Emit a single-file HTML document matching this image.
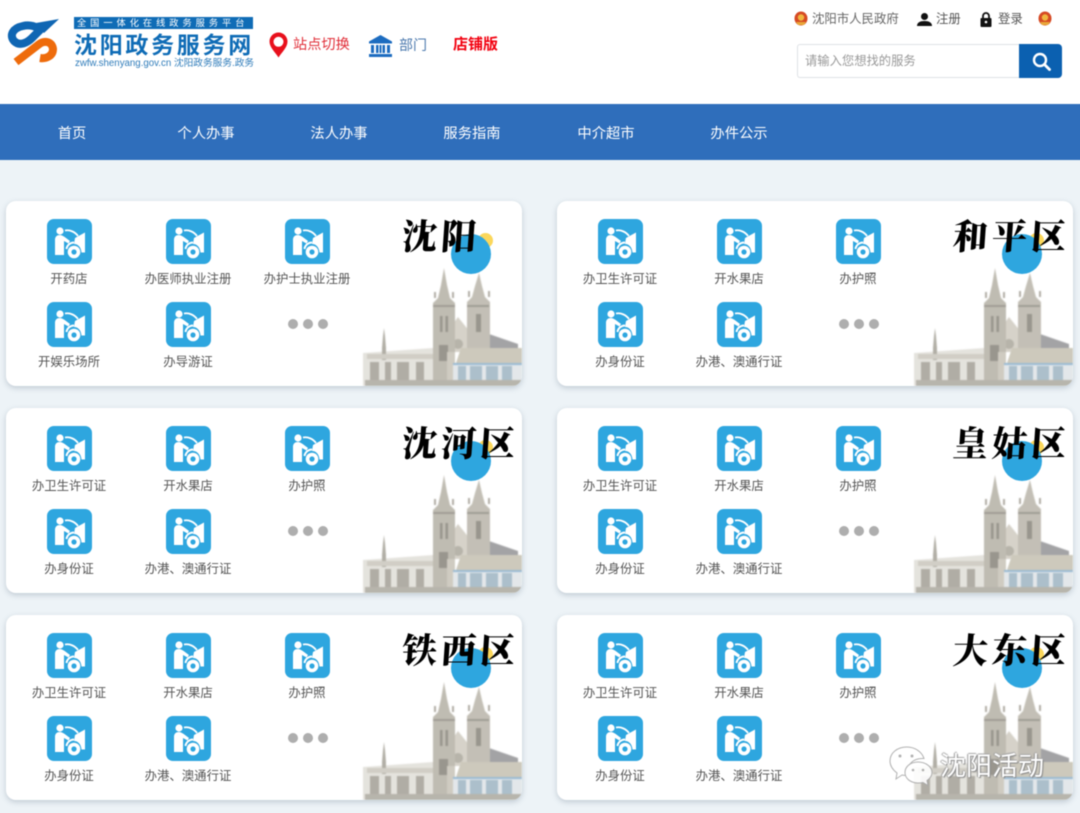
<!DOCTYPE html>
<html lang="zh">
<head>
<meta charset="utf-8">
<title>沈阳政务服务网</title>
<style>
html,body{margin:0;padding:0}
body{width:1080px;height:813px;overflow:hidden;background:#edf3f7;font-family:"Liberation Sans","Noto Sans CJK SC",sans-serif;position:relative}
#w{position:absolute;left:0;top:0;width:1080px;height:813px;filter:blur(.4px)}
.a{position:absolute;white-space:nowrap}
#top{position:absolute;left:-10px;top:-10px;width:1100px;height:114px;background:#fff}
#nav{position:absolute;left:-10px;top:104px;width:1100px;height:56px;background:#2f6ebb}
#nav span{position:absolute;top:0;width:100px;margin-left:-40px;text-align:center;line-height:60px;font-size:14.3px;color:#fff}
.card{position:absolute;width:516px;height:185px;background:#fff;border-radius:10px;box-shadow:0 2px 6px rgba(90,110,130,.3);overflow:hidden}
.c1{left:6px}.c2{left:557px}
.r1{top:201px}.r2{top:408px}.r3{top:615px}
.grid{position:absolute;left:3.5px;top:18px;width:357px}
.it{float:left;width:119px;height:83px;text-align:center;font-size:12.4px;line-height:20px;color:#555}
.it svg{display:block;width:45px;height:45px;margin:0 auto 5px}
.dots{position:relative}
.dots i{position:absolute;top:17px;width:10px;height:10px;border-radius:50%;background:#aeaeae}
.church{position:absolute;left:357px;top:67px;width:159px;height:118px;opacity:.9;filter:blur(.6px)}
.blue{position:absolute;left:445px;top:33px;width:40px;height:40px;border-radius:50%;background:#2ea6df}
.yel{position:absolute;left:472px;top:32px;width:15px;height:15px;border-radius:50%;background:#fbd75b}
.ttl{position:absolute;top:14px;left:396px;font-family:"Liberation Serif","Noto Serif CJK SC",serif;font-weight:900;font-size:35px;line-height:46px;letter-spacing:4px;color:#000;white-space:nowrap;transform:skewX(-4deg)}
</style>
</head>
<body>
<svg width="0" height="0" style="position:absolute">
<defs>
<symbol id="ic" viewBox="0 0 45 45">
<rect width="45" height="45" rx="7" fill="#2ea6df"/>
<circle cx="13" cy="12" r="3.600" fill="#fff"/>
<path d="M8 36V21c0-3.500 2-5 5-5 2 0 4 1.500 6 3l4 3-1.500 2.500-4.500-2.500V36z" fill="#fff"/>
<path d="M18 11.500c5-1 10 1.500 13 5.500" fill="none" stroke="#fff" stroke-width="1.800"/>
<path d="M28 19l10-5.500V33.500h-3.500C34 28 31 25 27 25z" fill="#fff"/>
<path d="M19.500 30c.5-4 4-6.500 7.500-6.500" fill="none" stroke="#fff" stroke-width="2"/>
<circle cx="27" cy="33" r="6.300" fill="#fff"/>
<circle cx="27" cy="33" r="2.600" fill="#2ea6df"/>
</symbol>
<symbol id="ch" viewBox="363 268 159 118">
<path d="M363 353l70-5v38h-70z" fill="#e2e0da"/>
<path d="M382 348l1-12 1-8 1 8 1 12v12h-4z" fill="#a9a69c"/>
<path d="M367 354h66v5h-66z" fill="#ccc9c0"/>
<path d="M370 362h9v20h-9zM385 362h6v20h-6zM397 362h12v20h-12zM416 362h8v20h-8z" fill="#a8a59c"/>
<path d="M489 334l29 10v8h-29z" fill="#99999c"/>
<path d="M447 352v-20l11-15 12 15v20z" fill="#d2cec4"/>
<circle cx="458" cy="344" r="5" fill="#b0aca1"/>
<path d="M433 386V303l5-5 3-13 3-17 3 17 3 13 5 5v83z" fill="#b9b5aa"/>
<path d="M467 352V302l5-5 3-11 4-13 3 13 3 11 5 5v50z" fill="#bdb9ae"/>
<path d="M434 298h2v-6h-2zM452 298h2v-6h-2zM468 297h2v-6h-2zM488 297h2v-6h-2z" fill="#a8a49a"/>
<path d="M433 305h22v2h-22zM467 305h22v2h-22z" fill="#96938a"/>
<path d="M440 316h2.500v16H440zM445.500 316h2.500v16h-2.500zM476 314h5v18h-5zM439 345h9v16h-9z" fill="#8e8b82"/>
<path d="M447 352h8v34h-8z" fill="#cac6bb"/>
<path d="M455 366l6-18h61v15z" fill="#c8c4b5"/>
<path d="M453 363h69v22h-69z" fill="#e0e5e8"/>
<path d="M453 363h69v2h-69z" fill="#8fb3cf"/>
<path d="M458 366h8v14h-8zM470 366h12v14h-12zM486 366h12v14h-12zM502 366h10v14h-10z" fill="#a3b9c6"/>
<path d="M365 380h157v6H365z" fill="#b0ada4"/>
</symbol>
<symbol id="emb" viewBox="0 0 14 15">
<ellipse cx="7" cy="7.500" rx="6.500" ry="7" fill="#d64a24"/>
<circle cx="7" cy="6.500" r="3.200" fill="#f0b640"/>
<path d="M2 11h10l-2 3H4z" fill="#e8a838"/>
</symbol>
</defs>
</svg>
<div id="w">
<div id="top"></div>

<svg class="a" style="left:0;top:10px" width="70" height="62" viewBox="0 10 70 62">
<path d="M16 62 38 45C44 40 52 41 53 49 53 56 46 59 40 58" fill="none" stroke="#ee6b0b" stroke-width="8"/>
<path d="M38 28C32 25 27 25 23 26 13 28 9 35 14 41 20 47 28 42 32 38L43 27" fill="none" stroke="#0f66b3" stroke-width="8"/>
<path d="M59 19 36 23 44 33z" fill="#0f66b3"/>
</svg>

<div class="a" style="left:74px;top:17px;width:179px;height:12px;background:#0f6cb6;color:#fff;font-size:9.200px;line-height:12px;letter-spacing:4px;text-indent:3px">全国一体化在线政务服务平台</div>
<div class="a" style="left:74px;top:30px;font-size:23px;line-height:31px;font-weight:700;letter-spacing:2.700px;color:#0f6cb6">沈阳政务服务网</div>
<div class="a" style="left:75px;top:57px;font-size:9.700px;line-height:13px;color:#2f7cba">zwfw.shenyang.gov.cn 沈阳政务服务.政务</div>

<svg class="a" style="left:269px;top:32px" width="19" height="26" viewBox="0 0 19 26">
<path d="M9.500 .5C4.500.5.500 4.500.5 9.500c0 6 6 11 9 16 3-5 9-10 9-16 0-5-4-9-9-9zm0 4.300a5 5 0 1 1 0 10 5 5 0 0 1 0-10z" fill="#e8101c"/>
</svg>
<div class="a" style="left:293px;top:35px;font-size:14.200px;line-height:20px;color:#e1303a">站点切换</div>

<svg class="a" style="left:368px;top:35px" width="25" height="22" viewBox="0 0 25 22">
<path d="M12.500 0 24 6.500v2H1v-2zM3 10h3v8H3zM8 10h2.500v8H8zM14.500 10H17v8h-2.500zM19 10h3v8h-3zM11.500 10h2v8h-2zM1 19h23v3H1z" fill="#1c6cc0"/>
</svg>
<div class="a" style="left:399px;top:35px;font-size:14px;line-height:20px;color:#4a78ad">部门</div>
<div class="a" style="left:453px;top:35px;font-size:15px;line-height:20px;font-weight:700;color:#f2000f">店铺版</div>

<svg class="a" style="left:794px;top:11px" width="14" height="15"><use href="#emb"/></svg>
<div class="a" style="left:812px;top:10px;font-size:12.400px;line-height:18px;color:#666">沈阳市人民政府</div>
<svg class="a" style="left:917px;top:13px" width="15" height="13" viewBox="0 0 15 13"><circle cx="7.500" cy="3.500" r="3.500" fill="#111"/><path d="M0 13c0-3.500 3-5 7.500-5S15 9.500 15 13z" fill="#111"/></svg>
<div class="a" style="left:936px;top:10px;font-size:12.400px;line-height:18px;color:#555">注册</div>
<svg class="a" style="left:980px;top:12px" width="12" height="15" viewBox="0 0 12 15"><path d="M3 6V4a3 3 0 0 1 6 0v2" fill="none" stroke="#111" stroke-width="1.800"/><rect x=".5" y="6" width="11" height="9" rx="1" fill="#111"/><circle cx="6" cy="10" r="1.300" fill="#fff"/></svg>
<div class="a" style="left:998px;top:10px;font-size:12.400px;line-height:18px;color:#555">登录</div>
<svg class="a" style="left:1038px;top:11px" width="14" height="15"><use href="#emb"/></svg>

<div class="a" style="left:797px;top:44px;width:222px;height:32px;border:1px solid #dfe2e6;border-right:none;border-radius:3px 0 0 3px;background:#fff;font-size:12.300px;line-height:33px;color:#999;text-indent:7px">请输入您想找的服务</div>
<div class="a" style="left:1019px;top:44px;width:43px;height:34px;background:#0b60b0;border-radius:0 4px 4px 0"></div>
<svg class="a" style="left:1032px;top:52px" width="19" height="19" viewBox="0 0 19 19"><circle cx="8" cy="8" r="6" fill="none" stroke="#fff" stroke-width="2.400"/><path d="M12.500 12.500l5 5" stroke="#fff" stroke-width="2.800" stroke-linecap="round"/></svg>

<div id="nav">
<span style="left:72px">首页</span>
<span style="left:206px">个人办事</span>
<span style="left:339px">法人办事</span>
<span style="left:472px">服务指南</span>
<span style="left:606px">中介超市</span>
<span style="left:739px">办件公示</span>
</div>

<div class="card c1 r1">
<svg class="church"><use href="#ch"/></svg><div class="yel"></div><div class="blue"></div>
<div class="ttl">沈阳</div>
<div class="grid">
<div class="it"><svg><use href="#ic"/></svg>开药店</div>
<div class="it"><svg><use href="#ic"/></svg>办医师执业注册</div>
<div class="it"><svg><use href="#ic"/></svg>办护士执业注册</div>
<div class="it"><svg><use href="#ic"/></svg>开娱乐场所</div>
<div class="it"><svg><use href="#ic"/></svg>办导游证</div>
<div class="it dots"><i style="left:40px"></i><i style="left:55px"></i><i style="left:70px"></i></div>
</div>
</div>

<div class="card c2 r1">
<svg class="church"><use href="#ch"/></svg><div class="yel"></div><div class="blue"></div>
<div class="ttl">和平区</div>
<div class="grid">
<div class="it"><svg><use href="#ic"/></svg>办卫生许可证</div>
<div class="it"><svg><use href="#ic"/></svg>开水果店</div>
<div class="it"><svg><use href="#ic"/></svg>办护照</div>
<div class="it"><svg><use href="#ic"/></svg>办身份证</div>
<div class="it"><svg><use href="#ic"/></svg>办港、澳通行证</div>
<div class="it dots"><i style="left:40px"></i><i style="left:55px"></i><i style="left:70px"></i></div>
</div>
</div>

<div class="card c1 r2">
<svg class="church"><use href="#ch"/></svg><div class="yel"></div><div class="blue"></div>
<div class="ttl">沈河区</div>
<div class="grid">
<div class="it"><svg><use href="#ic"/></svg>办卫生许可证</div>
<div class="it"><svg><use href="#ic"/></svg>开水果店</div>
<div class="it"><svg><use href="#ic"/></svg>办护照</div>
<div class="it"><svg><use href="#ic"/></svg>办身份证</div>
<div class="it"><svg><use href="#ic"/></svg>办港、澳通行证</div>
<div class="it dots"><i style="left:40px"></i><i style="left:55px"></i><i style="left:70px"></i></div>
</div>
</div>

<div class="card c2 r2">
<svg class="church"><use href="#ch"/></svg><div class="yel"></div><div class="blue"></div>
<div class="ttl">皇姑区</div>
<div class="grid">
<div class="it"><svg><use href="#ic"/></svg>办卫生许可证</div>
<div class="it"><svg><use href="#ic"/></svg>开水果店</div>
<div class="it"><svg><use href="#ic"/></svg>办护照</div>
<div class="it"><svg><use href="#ic"/></svg>办身份证</div>
<div class="it"><svg><use href="#ic"/></svg>办港、澳通行证</div>
<div class="it dots"><i style="left:40px"></i><i style="left:55px"></i><i style="left:70px"></i></div>
</div>
</div>

<div class="card c1 r3">
<svg class="church"><use href="#ch"/></svg><div class="yel"></div><div class="blue"></div>
<div class="ttl">铁西区</div>
<div class="grid">
<div class="it"><svg><use href="#ic"/></svg>办卫生许可证</div>
<div class="it"><svg><use href="#ic"/></svg>开水果店</div>
<div class="it"><svg><use href="#ic"/></svg>办护照</div>
<div class="it"><svg><use href="#ic"/></svg>办身份证</div>
<div class="it"><svg><use href="#ic"/></svg>办港、澳通行证</div>
<div class="it dots"><i style="left:40px"></i><i style="left:55px"></i><i style="left:70px"></i></div>
</div>
</div>

<div class="card c2 r3">
<svg class="church"><use href="#ch"/></svg><div class="yel"></div><div class="blue"></div>
<div class="ttl">大东区</div>
<div class="grid">
<div class="it"><svg><use href="#ic"/></svg>办卫生许可证</div>
<div class="it"><svg><use href="#ic"/></svg>开水果店</div>
<div class="it"><svg><use href="#ic"/></svg>办护照</div>
<div class="it"><svg><use href="#ic"/></svg>办身份证</div>
<div class="it"><svg><use href="#ic"/></svg>办港、澳通行证</div>
<div class="it dots"><i style="left:40px"></i><i style="left:55px"></i><i style="left:70px"></i></div>
</div>
</div>

<svg class="a" style="left:888px;top:745px;opacity:.9" width="50" height="46" viewBox="0 0 50 46">
<path d="M19 2C9 2 2 8 2 16c0 5 3 9 7 12l-1 6 6-4c2 .5 3 .5 5 .5h2c-1-2-1-4-1-5 0-7 6-12 14-12h2C34 7 27 2 19 2z" fill="#fff" stroke="#aaa" stroke-width="1"/>
<path d="M30 17c-8 0-13 5-13 10.500S22 38 30 38c2 0 3 0 5-.5l5 3-1-5c3-2 5-5 5-8 0-5.500-6-10.500-14-10.500z" fill="#fff" stroke="#aaa" stroke-width="1"/>
<circle cx="12" cy="11" r="1.500" fill="#aaa"/><circle cx="24" cy="11" r="1.500" fill="#aaa"/>
<circle cx="25" cy="25" r="1.300" fill="#aaa"/><circle cx="35" cy="25" r="1.300" fill="#aaa"/>
</svg>
<div class="a" style="left:940px;top:748px;font-size:26px;line-height:36px;color:#fff;text-shadow:1px 1px 1px #888,-1px 0 1px #999,0 -1px 1px #aaa">沈阳活动</div>
</div>
</body>
</html>
